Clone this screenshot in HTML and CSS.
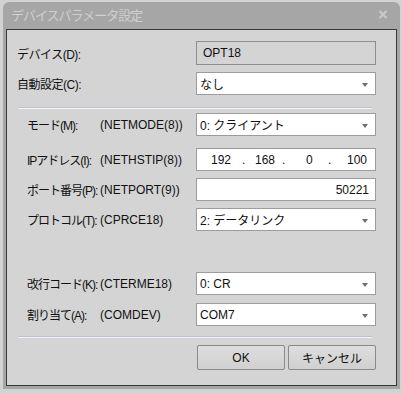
FILE: index.html
```html
<!DOCTYPE html>
<html lang="ja">
<head>
  <meta charset="UTF-8" />
  <title>デバイスパラメータ設定</title>
  <link rel="stylesheet" href="styles.css">
</head>
<body>

<div class="window">
  <div class="titlebar">
    <span class="title">デバイスパラメータ設定</span>
    <svg class="close" width="10" height="9" viewBox="0 0 10 9">
      <path d="M1.5 1 L8.5 8 M8.5 1 L1.5 8" stroke="#c9c9c9" stroke-width="2.2" />
    </svg>
  </div>

  <div class="client">
    <div class="row first">
      <span class="label wide">デバイス(D):</span>
      <div class="field readonly">OPT18</div>
    </div>
    <div class="row r2">
      <span class="label wide">自動設定(C):</span>
      <div class="field select">なし<i class="arrow"></i></div>
    </div>

    <div class="sep sep1"></div>

    <div class="row r3">
      <span class="label">モード(M):</span>
      <span class="param">(NETMODE(8))</span>
      <div class="field select">0: クライアント<i class="arrow"></i></div>
    </div>
    <div class="row r4">
      <span class="label">IPアドレス(I):</span>
      <span class="param">(NETHSTIP(8))</span>
      <div class="field ip">
        <span class="oct o1">192</span><span class="dot d1">.</span>
        <span class="oct o2">168</span><span class="dot d2">.</span>
        <span class="oct o3">0</span><span class="dot d3">.</span>
        <span class="oct">100</span>
      </div>
    </div>
    <div class="row r5">
      <span class="label">ポート番号(P):</span>
      <span class="param">(NETPORT(9))</span>
      <div class="field number">50221</div>
    </div>
    <div class="row r6">
      <span class="label">プロトコル(T):</span>
      <span class="param">(CPRCE18)</span>
      <div class="field select">2: データリンク<i class="arrow"></i></div>
    </div>

    <div class="row r7">
      <span class="label">改行コード(K):</span>
      <span class="param">(CTERME18)</span>
      <div class="field select">0: CR<i class="arrow"></i></div>
    </div>
    <div class="row r8">
      <span class="label">割り当て(A):</span>
      <span class="param">(COMDEV)</span>
      <div class="field select">COM7<i class="arrow"></i></div>
    </div>

    <div class="sep sep2"></div>

    <div class="buttons">
      <button class="btn">OK</button>
      <button class="btn">キャンセル</button>
    </div>
  </div>
</div>

</body>
</html>
```

FILE: styles.css
```css
body {
  margin: 0;
  background: #d2d2d2;
  font-family: "Liberation Sans", "Noto Sans CJK JP", sans-serif;
  font-size: 12px;
  color: #111;
}
.window {
  margin: 2px 0 0 3px;
  width: 397px;
  height: 387px;
  box-sizing: border-box;
  padding: 0 3px 3px 3px;
  background: #a6a6a6;
  border-radius: 6px 6px 0 0;
}
.titlebar {
  height: 27px;
  display: flex;
  align-items: center;
  justify-content: space-between;
  padding: 0 9px 0 5px;
}
.title {
  font-family: "Noto Sans CJK JP", sans-serif;
  font-size: 13px;
  letter-spacing: -1px;
  color: #cfcfcf;
  margin-top: -2px;
}
.close {
  margin-top: -2px;
}
.client {
  height: 357px;
  box-sizing: border-box;
  border: 1px solid #383838;
  background: #d4d4d4;
  padding: 11px 20px 0 10px;
}
.row {
  display: flex;
  align-items: center;
  height: 23px;
  padding-left: 10px;
  white-space: nowrap;
}
.row.first {
  height: 24px;
  padding-left: 0;
}
.row.r2 { margin-top: 7px; padding-left: 0; }
.row.r3 { margin-top: 4px; }
.row.r4 { margin-top: 12px; }
.row.r5 { margin-top: 7px; }
.row.r6 { margin-top: 7px; }
.row.r7 { margin-top: 41px; }
.row.r8 { margin-top: 8px; }
.label {
  width: 73px;
  letter-spacing: -1px;
}
.label.wide {
  width: 179px;
  letter-spacing: -0.5px;
}
.param {
  width: 96px;
}
.field {
  width: 180px;
  height: 100%;
  box-sizing: border-box;
  border: 1px solid #9c9c9c;
  background: #fff;
  display: flex;
  align-items: center;
  padding: 0 6px 0 3px;
  position: relative;
}
.field.readonly {
  background: #d4d4d4;
  border-color: #8e8e8e;
  padding-left: 6px;
}
.field.number {
  justify-content: flex-end;
}
.field.ip {
  padding: 0 8px 0 14px;
}
.o1 { width: 31px; }
.o2 { width: 27px; }
.o3 { width: 22px; }
.d1 { width: 13px; }
.d2 { width: 24px; }
.d3 { width: 19px; }
.arrow {
  position: absolute;
  right: 7px;
  top: 10px;
  width: 0;
  height: 0;
  border-top: 4px solid #707064;
  border-left: 3px solid transparent;
  border-right: 3px solid transparent;
}
.sep {
  height: 0;
  border-top: 1px solid #c0c0c8;
  border-bottom: 1px solid #f2f2fa;
  width: 354px;
  margin-left: 1px;
}
.sep1 { margin-top: 12px; }
.sep2 { margin-top: 10px; }
.buttons {
  display: flex;
  justify-content: flex-end;
  gap: 3px;
  margin-top: 7px;
}
.btn {
  width: 88px;
  height: 25px;
  font-family: "Liberation Sans", "Noto Sans CJK JP", sans-serif;
  font-size: 12px;
  color: #111;
  background: linear-gradient(#dedede, #d0d0d0);
  border: 1px solid #8a8a8a;
  border-radius: 2px;
  padding: 0;
}
```
